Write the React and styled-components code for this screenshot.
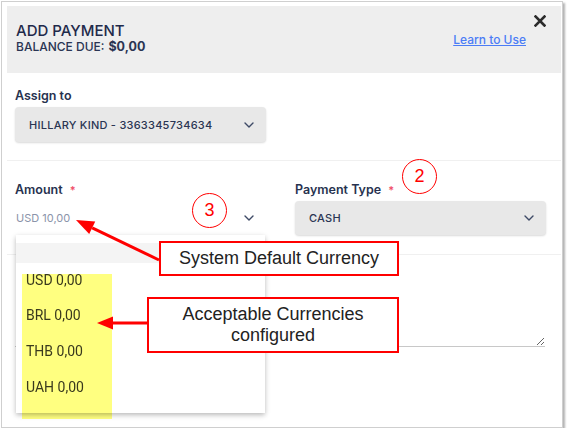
import React from "react";
import styled, { createGlobalStyle } from "styled-components";

const GlobalStyle = createGlobalStyle`
  html, body {
    margin: 0;
    background: #ffffff;
  }
  body {
    font-family: Inter, "Noto Sans", sans-serif;
  }
`;

const Frame = styled.div`
  position: relative;
  box-sizing: border-box;
  margin: 1px 0 0 1px;
  width: 562px;
  height: 427px;
  padding: 4px 1px 0 5px;
  border: 1px solid #cfcfcf;
  background: #ffffff;
  box-shadow: 2px 2px 2px rgba(0, 0, 0, 0.3);
`;

const Header = styled.header`
  display: flex;
  justify-content: space-between;
  height: 67px;
  box-sizing: border-box;
  padding: 9px 15px 0 9px;
  background: #eeeeee;
`;

const TitleBlock = styled.div`
  padding-top: 6px;
`;

const Title = styled.h1`
  margin: 0;
  font-size: 15px;
  line-height: 19px;
  font-weight: 500;
  color: #1f2a4a;
`;

const Balance = styled.div`
  font-size: 12px;
  line-height: 14px;
  font-weight: 500;
  color: #2a3553;

  strong {
    margin-left: 4px;
    font-weight: 700;
    font-size: 12.5px;
  }
`;

const HeaderSide = styled.div`
  display: flex;
  flex-direction: column;
  align-items: flex-end;
`;

const CloseButton = styled.button`
  display: flex;
  padding: 0;
  border: 0;
  background: none;
  cursor: pointer;
`;

const HelpLink = styled.a`
  margin: 5px 20px 0 0;
  font-size: 12px;
  font-weight: 500;
  color: #4b7cf6;
  text-decoration: underline;
`;

const Section = styled.section`
  display: flex;
  gap: 29px;
  padding: ${(p) => p.$top}px 8px 0;
`;

const Divider = styled.hr`
  margin: ${(p) => p.$top}px 0 0;
  border: 0;
  border-top: 1px solid #f0f0f0;
`;

const Field = styled.div`
  position: relative;
  display: flex;
  flex-direction: column;
  width: ${(p) => p.$width || 251}px;
`;

const Label = styled.label`
  margin-bottom: ${(p) => p.$gap || 4}px;
  font-size: 12.5px;
  line-height: 15px;
  font-weight: 600;
  color: #27324f;

  span {
    margin-left: 7px;
    color: #f0506a;
    font-size: 11px;
  }
`;

const Select = styled.div`
  display: flex;
  align-items: center;
  justify-content: space-between;
  height: ${(p) => p.$height || 35}px;
  box-sizing: border-box;
  padding: 0 12px 0 14px;
  border-radius: 4px;
  background: #e8e8e8;
  box-shadow: 0 1px 2px rgba(0, 0, 0, 0.15);
  font-size: 11px;
  font-weight: 500;
  letter-spacing: 0.25px;
  color: #2a3553;
`;

const AmountInput = styled.div`
  display: flex;
  align-items: center;
  justify-content: space-between;
  height: 33px;
  padding: 0 12px 0 1px;
  font-size: 11px;
  color: #8b94aa;
`;

const Menu = styled.ul`
  position: absolute;
  top: 100%;
  left: 1px;
  right: 1px;
  margin: 0;
  padding: 8px 0 8px;
  list-style: none;
  background: #ffffff;
  box-shadow: 0 2px 5px rgba(0, 0, 0, 0.28);
  z-index: 2;
`;

const MenuHead = styled.li`
  height: 20px;
  background: #f4f4f4;
`;

const Option = styled.li`
  display: flex;
  align-items: center;
  height: 36px;
  padding-left: 10px;
  font-family: Roboto, "Liberation Sans", sans-serif;
  font-size: 14px;
  line-height: 16px;
  color: #3a3a3a;

  &:nth-child(2) {
    height: 34px;
  }
`;

const Highlight = styled.div`
  position: absolute;
  left: 6px;
  top: 39px;
  width: 90px;
  height: 145px;
  background: #ffff80;
  mix-blend-mode: multiply;
  pointer-events: none;
`;

const Notes = styled.textarea`
  display: block;
  width: 530px;
  height: 51px;
  margin-top: 19px;
  box-sizing: border-box;
  padding: 4px 0;
  border: 0;
  border-bottom: 1px solid #c8c8c8;
  outline: none;
  resize: vertical;
  font-family: inherit;
`;

const Callout = styled.div`
  position: absolute;
  left: ${(p) => p.$x}px;
  top: ${(p) => p.$y}px;
  width: ${(p) => p.$w}px;
  height: ${(p) => p.$h}px;
  box-sizing: border-box;
  display: flex;
  align-items: center;
  justify-content: center;
  border: 2px solid #ff0000;
  background: #ffffff;
  font-family: "Liberation Sans", Arial, sans-serif;
  font-size: 18px;
  line-height: 21px;
  text-align: center;
  color: #222222;
  z-index: 3;
`;

const StepBadge = styled.div`
  position: absolute;
  left: ${(p) => p.$x}px;
  top: ${(p) => p.$y}px;
  width: 35px;
  height: 35px;
  box-sizing: border-box;
  display: flex;
  align-items: center;
  justify-content: center;
  border: 1.5px solid #ff0000;
  border-radius: 50%;
  font-family: "Liberation Sans", Arial, sans-serif;
  font-size: 18px;
  color: #ff0000;
  z-index: 3;
`;

const Arrows = styled.svg`
  position: absolute;
  left: 0;
  top: 0;
  width: 100%;
  height: 100%;
  pointer-events: none;
  z-index: 4;
`;

const Chevron = () => (
  <svg width="10" height="6" viewBox="0 0 10 6">
    <path d="M1 1l4 4 4-4" fill="none" stroke="#3e4a66" strokeWidth="1.4" strokeLinecap="round" strokeLinejoin="round" />
  </svg>
);

const CloseIcon = () => (
  <svg width="12" height="12" viewBox="0 0 12 12">
    <path d="M1.5 1.5l9 9M10.5 1.5l-9 9" stroke="#2b2b2b" strokeWidth="2.6" strokeLinecap="square" />
  </svg>
);

// arrow from a callout box to what it points at
const Arrow = ({ from, to, head = 18, half = 7 }) => {
  const dx = to[0] - from[0];
  const dy = to[1] - from[1];
  const len = Math.hypot(dx, dy);
  const ux = dx / len;
  const uy = dy / len;
  const bx = to[0] - ux * head;
  const by = to[1] - uy * head;
  const px = -uy * half;
  const py = ux * half;
  return (
    <g fill="#ff0000" stroke="#ff0000">
      <line x1={from[0]} y1={from[1]} x2={bx} y2={by} strokeWidth="3" />
      <polygon points={`${to[0]},${to[1]} ${bx + px},${by + py} ${bx - px},${by - py}`} stroke="none" />
    </g>
  );
};

const currencies = ["USD 0,00", "BRL 0,00", "THB 0,00", "UAH 0,00"];

export default function App() {
  return (
    <>
      <GlobalStyle />
      <Frame>
        <Header>
          <TitleBlock>
            <Title>ADD PAYMENT</Title>
            <Balance>
              BALANCE DUE:<strong>$0,00</strong>
            </Balance>
          </TitleBlock>
          <HeaderSide>
            <CloseButton aria-label="Close">
              <CloseIcon />
            </CloseButton>
            <HelpLink href="#">Learn to Use</HelpLink>
          </HeaderSide>
        </Header>

        <Section $top={15}>
          <Field>
            <Label>Assign to</Label>
            <Select>
              HILLARY KIND - 3363345734634
              <Chevron />
            </Select>
          </Field>
        </Section>

        <Divider $top={18} />

        <Section $top={21}>
          <Field>
            <Label $gap={3}>
              Amount<span>*</span>
            </Label>
            <AmountInput>
              USD 10,00
              <Chevron />
            </AmountInput>
            <Menu>
              <MenuHead />
              {currencies.map((c) => (
                <Option key={c}>{c}</Option>
              ))}
              <Highlight />
            </Menu>
          </Field>
          <Field>
            <Label $gap={3}>
              Payment Type<span>*</span>
            </Label>
            <Select $height={34}>
              CASH
              <Chevron />
            </Select>
          </Field>
        </Section>

        <Divider $top={19} />

        <Section $top={22}>
          <Field $width={530}>
            <Notes aria-label="Notes" />
          </Field>
        </Section>

        <StepBadge $x={190} $y={191}>3</StepBadge>
        <StepBadge $x={400} $y={157}>2</StepBadge>

        <Callout $x={157} $y={239} $w={240} $h={35}>
          System Default Currency
        </Callout>
        <Callout $x={145} $y={295} $w={252} $h={56}>
          Acceptable Currencies
          <br />
          configured
        </Callout>

        <Arrows>
          <Arrow from={[157, 258]} to={[74, 218]} />
          <Arrow from={[146, 321]} to={[95, 321]} head={16} half={6.5} />
        </Arrows>
      </Frame>
    </>
  );
}
